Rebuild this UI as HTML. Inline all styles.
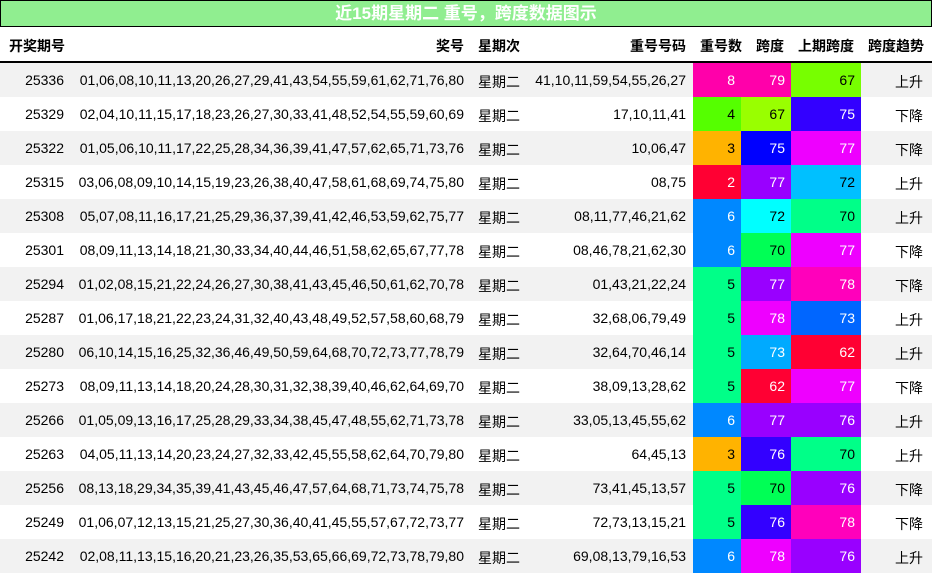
<!DOCTYPE html>
<html><head><meta charset="utf-8"><style>
*{margin:0;padding:0;box-sizing:border-box}
body{width:932px;height:574px;background:#fff;font-family:"Liberation Sans","Noto Sans CJK SC",sans-serif;font-size:14px;color:#000;position:relative;overflow:hidden}
.t{position:absolute;left:0;top:0;width:932px;height:27px;background:#90EE90;border:1px solid #000;color:#fff;font-weight:bold;font-size:17px;text-align:center;line-height:25px}
.h{position:absolute;top:27px;left:0;width:932px;height:36px;border-bottom:2px solid #000;font-weight:bold}
.h span{position:absolute;top:2px;line-height:34px;white-space:nowrap}
.r span{position:absolute;top:0;line-height:34px;white-space:nowrap}
.r{position:absolute;left:0;width:932px;height:34px}
.g{background:#f2f2f2}
.c{position:absolute;top:0;height:34px;line-height:34px;text-align:right;padding-right:6px}
</style></head><body>
<div class="t">近15期星期二 重号，跨度数据图示</div>
<div class="h">
<span style="left:9px">开奖期号</span>
<span style="right:468px">奖号</span>
<span style="left:478px">星期次</span>
<span style="right:246px">重号号码</span>
<span style="left:700px">重号数</span>
<span style="left:756px">跨度</span>
<span style="left:798px">上期跨度</span>
<span style="left:868px">跨度趋势</span>
</div>
<div id="rows"></div>
<script>
var d=[
["25336","01,06,08,10,11,13,20,26,27,29,41,43,54,55,59,61,62,71,76,80","41,10,11,59,54,55,26,27","8","#FF00AA",1,"79","#FF00AA",1,"67","#77FF00",0,"上升"],
["25329","02,04,10,11,15,17,18,23,26,27,30,33,41,48,52,54,55,59,60,69","17,10,11,41","4","#55FF00",0,"67","#99FF00",0,"75","#3300FF",1,"下降"],
["25322","01,05,06,10,11,17,22,25,28,34,36,39,41,47,57,62,65,71,73,76","10,06,47","3","#FFB300",0,"75","#0000FF",1,"77","#EE00FF",1,"下降"],
["25315","03,06,08,09,10,14,15,19,23,26,38,40,47,58,61,68,69,74,75,80","08,75","2","#FF0033",1,"77","#9900FF",1,"72","#00C0FF",0,"上升"],
["25308","05,07,08,11,16,17,21,25,29,36,37,39,41,42,46,53,59,62,75,77","08,11,77,46,21,62","6","#0088FF",1,"72","#00FFFF",0,"70","#00FF88",0,"上升"],
["25301","08,09,11,13,14,18,21,30,33,34,40,44,46,51,58,62,65,67,77,78","08,46,78,21,62,30","6","#0088FF",1,"70","#00FF55",0,"77","#EE00FF",1,"下降"],
["25294","01,02,08,15,21,22,24,26,27,30,38,41,43,45,46,50,61,62,70,78","01,43,21,22,24","5","#00FF88",0,"77","#9900FF",1,"78","#FF00BB",1,"下降"],
["25287","01,06,17,18,21,22,23,24,31,32,40,43,48,49,52,57,58,60,68,79","32,68,06,79,49","5","#00FF88",0,"78","#EE00FF",1,"73","#0066FF",1,"上升"],
["25280","06,10,14,15,16,25,32,36,46,49,50,59,64,68,70,72,73,77,78,79","32,64,70,46,14","5","#00FF88",0,"73","#00AAFF",1,"62","#FF0033",1,"上升"],
["25273","08,09,11,13,14,18,20,24,28,30,31,32,38,39,40,46,62,64,69,70","38,09,13,28,62","5","#00FF88",0,"62","#FF0033",1,"77","#EE00FF",1,"下降"],
["25266","01,05,09,13,16,17,25,28,29,33,34,38,45,47,48,55,62,71,73,78","33,05,13,45,55,62","6","#0088FF",1,"77","#9900FF",1,"76","#9900FF",1,"上升"],
["25263","04,05,11,13,14,20,23,24,27,32,33,42,45,55,58,62,64,70,79,80","64,45,13","3","#FFB300",0,"76","#3300FF",1,"70","#00FF88",0,"上升"],
["25256","08,13,18,29,34,35,39,41,43,45,46,47,57,64,68,71,73,74,75,78","73,41,45,13,57","5","#00FF88",0,"70","#00FF55",0,"76","#9900FF",1,"下降"],
["25249","01,06,07,12,13,15,21,25,27,30,36,40,41,45,55,57,67,72,73,77","72,73,13,15,21","5","#00FF88",0,"76","#3300FF",1,"78","#FF00BB",1,"下降"],
["25242","02,08,11,13,15,16,20,21,23,26,35,53,65,66,69,72,73,78,79,80","69,08,13,79,16,53","6","#0088FF",1,"78","#EE00FF",1,"76","#9900FF",1,"上升"]];
var h="";
d.forEach(function(r,i){
var top=63+i*34;
h+='<div class="r'+(i%2==0?' g':'')+'" style="top:'+top+'px">'+
'<span style="right:868px">'+r[0]+'</span>'+
'<span style="right:468px">'+r[1]+'</span>'+
'<span style="left:478px;top:2px">星期二</span>'+
'<span style="right:246px">'+r[2]+'</span>'+
'<div class="c" style="left:693px;width:48px;background:'+r[4]+';color:'+(r[5]?'#fff':'#000')+'">'+r[3]+'</div>'+
'<div class="c" style="left:741px;width:50px;background:'+r[7]+';color:'+(r[8]?'#fff':'#000')+'">'+r[6]+'</div>'+
'<div class="c" style="left:791px;width:70px;background:'+r[10]+';color:'+(r[11]?'#fff':'#000')+'">'+r[9]+'</div>'+
'<span style="right:9px;top:2px">'+r[12]+'</span></div>';
});
document.getElementById("rows").innerHTML=h;
</script>
</body></html>
